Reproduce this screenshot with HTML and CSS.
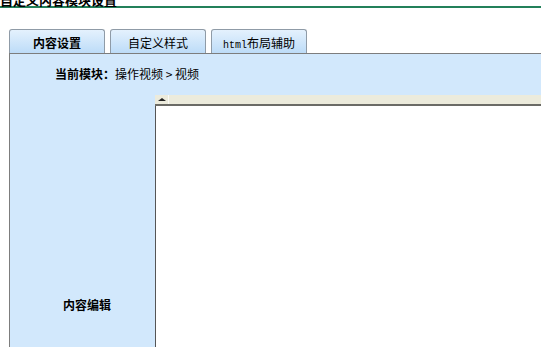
FILE: index.html
```html
<!DOCTYPE html>
<html lang="zh-CN">
<head>
    <meta charset="UTF-8">
    <title>自定义内容模块设置</title>
    <link rel="stylesheet" href="styles.css">
</head>
<body>

    <div class="title">自定义内容模块设置</div>

    <div class="tabs">
        <div class="tab active">内容设置</div>
        <div class="tab">自定义样式</div>
        <div class="tab"><span class="mono">html</span>布局辅助</div>
    </div>

    <div class="panel">
        <div class="row-module">
            <b>当前模块：</b>操作视频 &gt; 视频
        </div>
        <div class="row-edit">
            <div class="label">内容编辑</div>
            <div class="editor">
                <div class="toolbar">
                    <span class="collapse"></span>
                </div>
                <div class="area"></div>
            </div>
        </div>
    </div>

</body>
</html>
```

FILE: styles.css
```css
body {
    margin: 0;
    font-family: "Noto Sans CJK SC", "DejaVu Sans", sans-serif;
    font-size: 12px;
    color: #000;
    background-color: #fff;
    overflow: hidden;
}
.title {
    margin-top: -7px;
    font-size: 13px;
    font-weight: bold;
    line-height: 13px;
    border-bottom: 2px solid #23805a;
}
.tabs {
    display: flex;
    gap: 5px;
    margin: 21px 0 0 9px;
}
.tab {
    width: 96px;
    height: 24px;
    box-sizing: border-box;
    padding-top: 5px;
    text-align: center;
    line-height: 16px;
    border: 1px solid #8f9ba7;
    border-bottom: none;
    border-radius: 3px 3px 0 0;
    background: linear-gradient(#e4f1fd, #bddcf8);
}
.tab.active {
    font-weight: bold;
}
.mono {
    font-family: "Liberation Mono", monospace;
    font-size: 10px;
}
.panel {
    margin-left: 9px;
    border-top: 1px solid #7d7d7d;
    border-left: 1px solid #7d7d7d;
    background-color: #d2e8fc;
}
.row-module {
    height: 41px;
    box-sizing: border-box;
    padding: 12px 0 0 45px;
    line-height: 16px;
}
.row-edit {
    display: flex;
}
.label {
    width: 145px;
    flex-shrink: 0;
    padding: 202px 0 0 53px;
    box-sizing: border-box;
    height: 260px;
    font-weight: bold;
    line-height: 16px;
}
.editor {
    flex: 1;
    display: flex;
    flex-direction: column;
}
.toolbar {
    height: 9px;
    background-color: #ecebdc;
    border-bottom: 2px solid #6b6b66;
    display: flex;
}
.collapse {
    width: 13px;
    height: 9px;
    border-right: 1px solid #fafaf5;
    position: relative;
}
.collapse::after {
    content: "";
    position: absolute;
    left: 3px;
    top: 3px;
    border-left: 4px solid transparent;
    border-right: 4px solid transparent;
    border-bottom: 3px solid #222;
}
.area {
    flex: 1;
    background-color: #fff;
    border-left: 1px solid #555;
}
```
